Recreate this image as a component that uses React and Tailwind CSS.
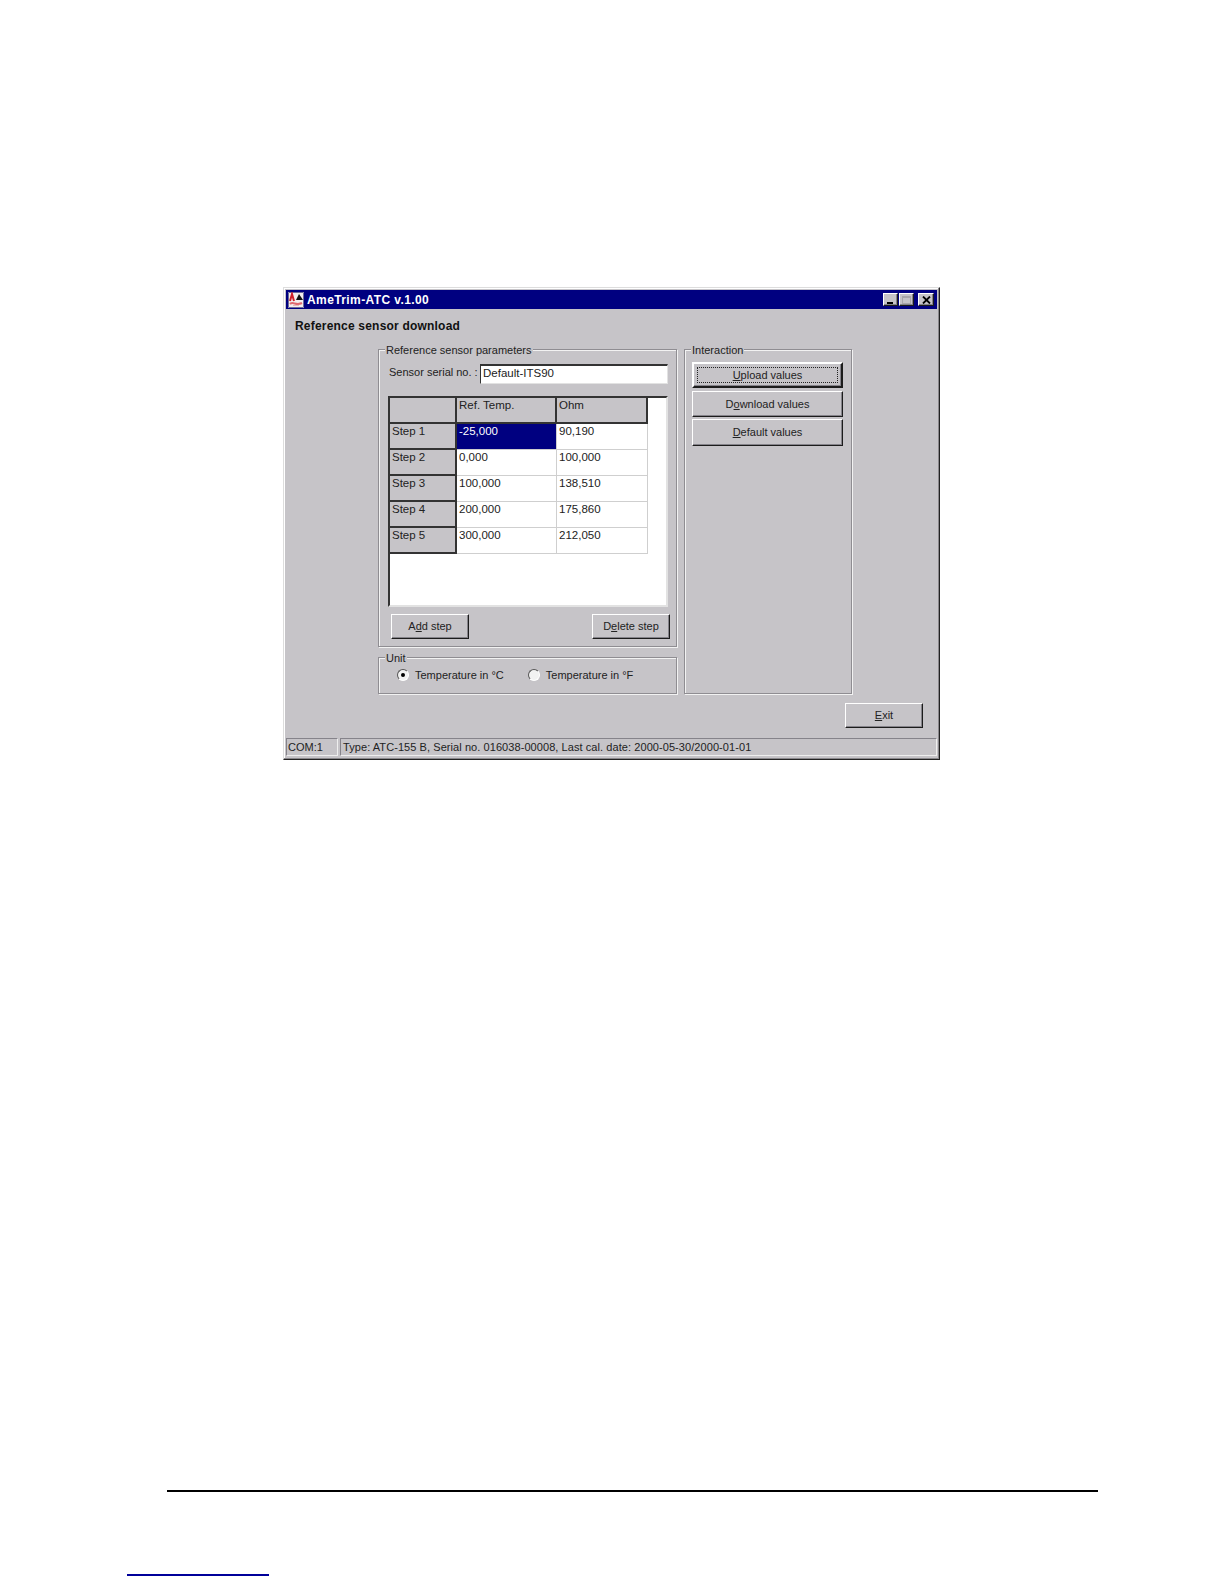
import React from "react";

const raised =
  "border border-t-white border-l-white border-r-[#1c1c1c] border-b-[#1c1c1c] shadow-[inset_-1px_-1px_0_#85838a]";
const etched =
  "relative border border-[#8f8d92] shadow-[inset_1px_1px_0_#f2f2f2,1px_1px_0_#f2f2f2]";

const rows = [
  ["Step 1", "-25,000", "90,190"],
  ["Step 2", "0,000", "100,000"],
  ["Step 3", "100,000", "138,510"],
  ["Step 4", "200,000", "175,860"],
  ["Step 5", "300,000", "212,050"],
];

function Logo() {
  return (
    <svg width="16" height="16" viewBox="0 0 16 16" className="shrink-0">
      <rect width="16" height="16" fill="#f4eeee" />
      <path d="M0.5 0.5 H15.5 V15.5 H0.5 Z" stroke="#6a6a9a" fill="none" />
      <path d="M2 9 L4 2 L6 9" stroke="#d0202a" strokeWidth="2" fill="none" />
      <path d="M8 8 L11 2 L15 8 Z" fill="#111" />
      <path d="M2 12 C5 9 8 14 14 11" stroke="#e06a70" strokeWidth="2" fill="none" />
      <rect x="5" y="13" width="6" height="1" fill="#e8b8b8" />
    </svg>
  );
}

function TitleButton({ children, className = "" }) {
  return (
    <div className={`w-[15px] h-[13px] bg-[#c6c4c8] flex items-center justify-center ${raised} ${className}`}>
      {children}
    </div>
  );
}

function Button({ children, className = "", focused }) {
  return (
    <button className={`relative flex items-center justify-center text-[11px] text-[#222] bg-[#c6c4c8] ${raised} ${className}`}>
      {focused && <span className="absolute inset-[3px] border border-dotted border-[#222]" />}
      {children}
    </button>
  );
}

function Radio({ checked, label }) {
  return (
    <div className="flex items-center gap-[6px]">
      <span className="w-3 h-3 -mt-px rounded-full bg-[#f2f2f2] border border-t-[#555] border-l-[#555] border-r-white border-b-white flex items-center justify-center">
        {checked && <span className="w-1 h-1 rounded-full bg-black" />}
      </span>
      <span>{label}</span>
    </div>
  );
}

function Grid() {
  return (
    <div className="ml-[9px] mt-3 w-[280px] h-[211px] bg-white border-t-2 border-l-2 border-t-[#333] border-l-[#333] border-r-2 border-b-2 border-r-[#e2e2e2] border-b-[#e2e2e2] overflow-hidden text-[11.5px] leading-[14px]">
      <div className="grid grid-cols-[67px_100px_91px] auto-rows-[26px] w-[258px]">
        <div className="bg-[#c6c4c8] border-r-2 border-b-2 border-[#333]" />
        <div className="bg-[#c6c4c8] border-r-2 border-b-2 border-[#333] pl-[2px]">Ref. Temp.</div>
        <div className="bg-[#c6c4c8] border-r-2 border-b-2 border-[#333] pl-[2px]">Ohm</div>
        {rows.map((row, i) => (
          <React.Fragment key={row[0]}>
            <div className="bg-[#c6c4c8] border-r-2 border-b-2 border-[#333] pl-[2px]">{row[0]}</div>
            <div className={`pl-[2px] border-r border-b border-[#cfcfcf] ${i === 0 ? "bg-[#000080] text-white" : ""}`}>{row[1]}</div>
            <div className="pl-[2px] border-r border-b border-[#cfcfcf]">{row[2]}</div>
          </React.Fragment>
        ))}
      </div>
    </div>
  );
}

export default function App() {
  return (
    <div className="w-[1224px] h-[1584px] bg-white font-['Liberation_Sans',sans-serif] text-[11px] text-[#222] pt-[287px] overflow-hidden">
      <div className="ml-[283px] w-[657px] h-[473px] bg-[#c6c4c8] border border-t-[#ddd] border-l-[#ddd] border-r-[#222] border-b-[#222] p-[2px] shadow-[inset_-1px_-1px_0_#8a888c,inset_1px_1px_0_#fff] flex flex-col">
        <div className="h-[19px] bg-[#000080] flex items-center pl-[2px] pr-[3px] shrink-0">
          <Logo />
          <span className="ml-[3px] text-xs font-bold text-white tracking-[0.4px]">AmeTrim-ATC v.1.00</span>
          <div className="ml-auto flex items-center">
            <TitleButton>
              <span className="w-[6px] h-[2px] bg-black mt-[7px] -ml-[2px]" />
            </TitleButton>
            <TitleButton className="ml-px">
              <span className="w-[9px] h-[8px] border border-[#a8a6aa] border-t-2" />
            </TitleButton>
            <TitleButton className="ml-[4px] w-[16px]">
              <svg width="9" height="8" viewBox="0 0 9 8">
                <path d="M1 0.5 L8 7.5 M8 0.5 L1 7.5" stroke="#000" strokeWidth="1.8" />
              </svg>
            </TitleButton>
          </div>
        </div>

        <div className="mt-[9px] ml-[9px] text-xs leading-4 font-bold text-[#111] tracking-[0.2px]">Reference sensor download</div>

        <div className="mt-[15px] ml-[92px] flex gap-[7px]">
          <div className="w-[299px] flex flex-col gap-[10px]">
            <div className={`h-[298px] pt-[14px] ${etched}`}>
              <span className="absolute -top-[8px] left-[6px] px-px bg-[#c6c4c8]">Reference sensor parameters</span>
              <div className="flex items-center pl-[10px]">
                <span className="w-[91px] whitespace-nowrap pb-[3px]">Sensor serial no. :</span>
                <div className="w-[188px] h-5 bg-white border border-t-2 border-t-[#333] border-l-[#333] border-r-[#e2e2e2] border-b-[#e2e2e2] pl-[2px] pb-[2px] flex items-center text-[11.5px]">
                  Default-ITS90
                </div>
              </div>
              <Grid />
              <div className="mt-[7px] pl-3 pr-[6px] flex justify-between">
                <Button className="w-[78px] h-[25px]"><span>A<u>d</u>d step</span></Button>
                <Button className="w-[78px] h-[25px]"><span>D<u>e</u>lete step</span></Button>
              </div>
            </div>
            <div className={`h-[37px] pl-[18px] flex items-center gap-[24px] ${etched}`}>
              <span className="absolute -top-[8px] left-[6px] px-px bg-[#c6c4c8]">Unit</span>
              <Radio checked label="Temperature in °C" />
              <Radio label="Temperature in °F" />
            </div>
          </div>

          <div className={`w-[168px] pt-3 pl-[7px] flex flex-col ${etched}`}>
            <span className="absolute -top-[8px] left-[6px] px-px bg-[#c6c4c8]">Interaction</span>
            <Button focused className="w-[151px] h-[26px] border-2 border-[#111]"><span><u>U</u>pload values</span></Button>
            <Button className="w-[151px] h-[26px] mt-[3px]"><span>D<u>o</u>wnload values</span></Button>
            <Button className="w-[151px] h-[27px] mt-[2px]"><span><u>D</u>efault values</span></Button>
          </div>
        </div>

        <div className="mt-[9px] pr-[14px] flex justify-end">
          <Button className="w-[78px] h-[25px]"><span><u>E</u>xit</span></Button>
        </div>

        <div className="mt-auto mb-px h-[18px] flex gap-[2px] leading-4">
          <div className="w-[52px] pl-px border border-t-[#85838a] border-l-[#85838a] border-r-[#eee] border-b-[#eee]">COM:1</div>
          <div className="flex-1 pl-[2px] border border-t-[#85838a] border-l-[#85838a] border-r-[#eee] border-b-[#eee] tracking-[0.07px]">
            Type: ATC-155 B, Serial no. 016038-00008, Last cal. date: 2000-05-30/2000-01-01
          </div>
        </div>
      </div>

      <div className="mt-[730px] ml-[167px] w-[931px] h-[2px] bg-black" />
      <div className="mt-[82px] ml-[127px] w-[142px] h-[2px] bg-[#00009a]" />
    </div>
  );
}
